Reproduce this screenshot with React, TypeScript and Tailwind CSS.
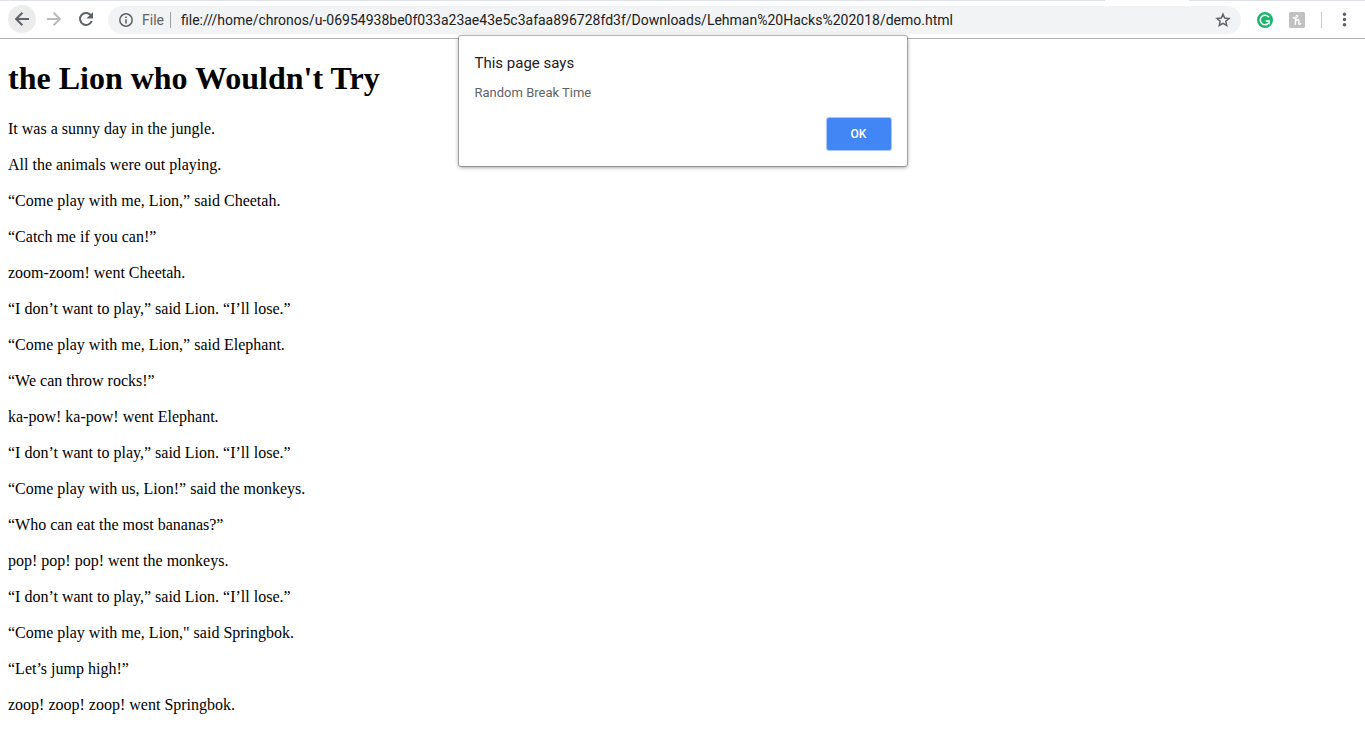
import { useState } from "react";
import { MdMoreVert } from "react-icons/md";

const PAGE_URL =
  "file:///home/chronos/u-06954938be0f033a23ae43e5c3afaa896728fd3f/Downloads/Lehman%20Hacks%202018/demo.html";

const STORY = [
  "It was a sunny day in the jungle.",
  "All the animals were out playing.",
  "“Come play with me, Lion,” said Cheetah.",
  "“Catch me if you can!”",
  "zoom-zoom! went Cheetah.",
  "“I don’t want to play,” said Lion. “I’ll lose.”",
  "“Come play with me, Lion,” said Elephant.",
  "“We can throw rocks!”",
  "ka-pow! ka-pow! went Elephant.",
  "“I don’t want to play,” said Lion. “I’ll lose.”",
  "“Come play with us, Lion!” said the monkeys.",
  "“Who can eat the most bananas?”",
  "pop! pop! pop! went the monkeys.",
  "“I don’t want to play,” said Lion. “I’ll lose.”",
  "“Come play with me, Lion,\" said Springbok.",
  "“Let’s jump high!”",
  "zoop! zoop! zoop! went Springbok.",
];

// 16px line icons for the toolbar
function LineIcon({ children }: { children: React.ReactNode }) {
  return (
    <svg
      viewBox="0 0 16 16"
      className="size-4"
      fill="none"
      stroke="currentColor"
      strokeWidth="2"
      aria-hidden="true"
    >
      {children}
    </svg>
  );
}

function GrammarlyIcon() {
  return (
    <svg viewBox="0 0 16 16" className="size-4" aria-hidden="true">
      <circle cx="8" cy="8" r="8" fill="#1cb66c" />
      <path
        d="M11.6 4.7A4.8 4.8 0 1 0 11.4 11.4"
        fill="none"
        stroke="#fff"
        strokeWidth="1.5"
        strokeLinecap="round"
      />
      <path d="M8.4 8.3H13V12.8L11.4 11.3V9.9H9.2Z" fill="#fff" />
    </svg>
  );
}

function HoneyIcon() {
  return (
    <svg viewBox="0 0 16 16" className="size-4" aria-hidden="true">
      <rect width="16" height="16" rx="1.5" fill="#c1c1c1" />
      <path
        d="M4.4 5.6C5.6 7 8.9 5.8 8.8 4.1C8.7 2.9 7.3 3.2 7.1 4.8L6.2 12.4M6.6 9.4C7.6 7.4 10.1 7.2 10 8.9C9.9 10.3 9.2 12.4 10.3 12.4C11 12.4 11.4 12 11.7 11.4"
        fill="none"
        stroke="#fff"
        strokeWidth="1.3"
        strokeLinecap="round"
        strokeLinejoin="round"
      />
    </svg>
  );
}

function Toolbar() {
  const [url, setUrl] = useState(PAGE_URL);

  return (
    <header className="border-b border-[#b0b0b0] bg-white font-[Roboto,sans-serif]">
      {/* bottom edge of the tab strip, open under the active tab */}
      <div className="flex h-px">
        <div className="flex-1 bg-[#dee1e6]" />
        <div className="w-21 bg-white" />
        <div className="w-44 bg-[#dee1e6]" />
      </div>
      <div className="flex items-center pt-1 pr-2.5 pb-1 pl-2 text-[#5f6368]">
        <nav className="flex gap-1 pb-px" aria-label="Navigation">
          <button
            type="button"
            aria-label="Back"
            className="flex size-7 items-center justify-center rounded-full bg-[#ececec]"
          >
            <LineIcon>
              <path d="M15 8H2.5M8.4 1.7L2.1 8L8.4 14.3" />
            </LineIcon>
          </button>
          <button
            type="button"
            aria-label="Forward"
            disabled
            className="flex size-7 items-center justify-center text-[#bababa]"
          >
            <LineIcon>
              <path d="M1 8H13.5M7.6 1.7L13.9 8L7.6 14.3" />
            </LineIcon>
          </button>
          <button type="button" aria-label="Reload" className="flex size-7 items-center justify-center">
            <LineIcon>
              <path d="M12.6 4A6 6 0 1 0 13.7 10" />
              <path d="M15 1V7.6H8.4Z" fill="currentColor" stroke="none" />
            </LineIcon>
          </button>
        </nav>

        <div className="ml-2 flex h-7 flex-1 items-center rounded-full bg-[#f1f3f4] px-2.5">
          <LineIcon>
            <circle cx="8" cy="8" r="6.2" strokeWidth="1.5" />
            <path d="M8 7.2V11.6M8 4.4V6" strokeWidth="1.6" />
          </LineIcon>
          <span className="ml-2 text-sm">File</span>
          <span className="mr-2.5 ml-1.5 h-4 w-px bg-[#9aa0a6]" />
          <input
            aria-label="Address"
            value={url}
            onChange={(e) => setUrl(e.target.value)}
            className="min-w-0 flex-1 bg-transparent text-sm text-[#202124] outline-none"
          />
          <button type="button" aria-label="Bookmark this page">
            <LineIcon>
              <path
                d="M8 2.2L9.7 6.1L14 6.5L10.8 9.3L11.7 13.5L8 11.3L4.3 13.5L5.2 9.3L2 6.5L6.3 6.1Z"
                strokeWidth="1.5"
              />
            </LineIcon>
          </button>
        </div>

        <div className="ml-4 flex items-center gap-4">
          <button type="button" aria-label="Grammarly">
            <GrammarlyIcon />
          </button>
          <button type="button" aria-label="Honey">
            <HoneyIcon />
          </button>
          <span className="h-4 w-px bg-[#c9cbce]" />
        </div>
        <button type="button" aria-label="Menu" className="ml-3">
          <MdMoreVert size={21} />
        </button>
      </div>
    </header>
  );
}

function AlertDialog({ onClose }: { onClose: () => void }) {
  return (
    <div
      role="alertdialog"
      aria-labelledby="alert-title"
      aria-describedby="alert-message"
      className="absolute top-9 left-1/2 w-112 -translate-x-1/2 rounded-xs bg-white p-4 font-[Roboto,sans-serif] shadow-[0_0_0_1px_rgba(0,0,0,0.2),0_1px_4px_rgba(0,0,0,0.5)]"
    >
      <h2 id="alert-title" className="text-[15px] leading-[22px] text-[#202124]">
        This page says
      </h2>
      <p id="alert-message" className="mt-2 text-[13px] leading-[22px] text-[#5f6368]">
        Random Break Time
      </p>
      <div className="mt-3.5 flex justify-end">
        <button
          type="button"
          autoFocus
          onClick={onClose}
          className="h-8 w-16 rounded-xs bg-[#4285f4] text-xs font-medium text-white shadow-[0_0_0_1px_#a9c8fa] outline-none"
        >
          OK
        </button>
      </div>
    </div>
  );
}

export default function App() {
  const [alertOpen, setAlertOpen] = useState(true);

  return (
    <div className="relative min-h-screen bg-white">
      <Toolbar />
      <main className="px-2 py-5 font-['Liberation_Serif',serif] text-base leading-5 text-black">
        <h1 className="mb-[22px] text-[32px] leading-[38px] font-bold">the Lion who Wouldn't Try</h1>
        <div className="space-y-4">
          {STORY.map((line, i) => (
            <p key={i}>{line}</p>
          ))}
        </div>
      </main>
      {alertOpen && <AlertDialog onClose={() => setAlertOpen(false)} />}
    </div>
  );
}
